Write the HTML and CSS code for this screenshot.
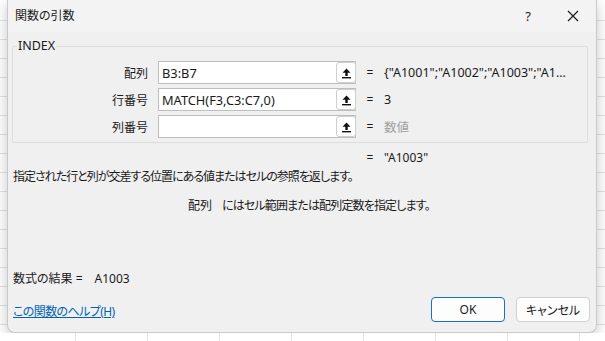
FILE: index.html
```html
<!DOCTYPE html>
<html>
<head>
    <title>関数の引数</title>
    <link rel="stylesheet" href="styles.css">
</head>
<body>
    <div class="dialog">
        <div class="titlebar">
            <span class="title">関数の引数</span>
            <span class="help">?</span>
            <span class="close">
                <svg width="12" height="12" viewBox="0 0 12 12"><path d="M1 1 L11 11 M11 1 L1 11" stroke="#1b1b1b" stroke-width="1.2" fill="none"/></svg>
            </span>
        </div>

        <div class="content">
            <fieldset class="group">
                <legend>INDEX</legend>
                <div class="args">
                    <div class="arg-row">
                        <label>配列</label>
                        <div class="ref-box">
                            <span class="ref-text">B3:B7</span>
                            <span class="ref-btn">
                                <svg width="11" height="12" viewBox="0 0 11 12"><path d="M5.5 1.5 L1.5 5.8 H4.3 V9 H6.7 V5.8 H9.5 Z" fill="#111"/><rect x="1" y="10" width="9" height="1.4" fill="#111"/></svg>
                            </span>
                        </div>
                        <span class="eq">=</span>
                        <span class="val">{"A1001";"A1002";"A1003";"A1...</span>
                    </div>
                    <div class="arg-row">
                        <label>行番号</label>
                        <div class="ref-box">
                            <span class="ref-text">MATCH(F3,C3:C7,0)</span>
                            <span class="ref-btn">
                                <svg width="11" height="12" viewBox="0 0 11 12"><path d="M5.5 1.5 L1.5 5.8 H4.3 V9 H6.7 V5.8 H9.5 Z" fill="#111"/><rect x="1" y="10" width="9" height="1.4" fill="#111"/></svg>
                            </span>
                        </div>
                        <span class="eq">=</span>
                        <span class="val">3</span>
                    </div>
                    <div class="arg-row">
                        <label>列番号</label>
                        <div class="ref-box">
                            <span class="ref-text"></span>
                            <span class="ref-btn">
                                <svg width="11" height="12" viewBox="0 0 11 12"><path d="M5.5 1.5 L1.5 5.8 H4.3 V9 H6.7 V5.8 H9.5 Z" fill="#111"/><rect x="1" y="10" width="9" height="1.4" fill="#111"/></svg>
                            </span>
                        </div>
                        <span class="eq">=</span>
                        <span class="val muted">数値</span>
                    </div>
                </div>
            </fieldset>

            <div class="formula-value"><span class="eq">=</span><span>"A1003"</span></div>
            <p class="desc">指定された行と列が交差する位置にある値またはセルの参照を返します。</p>
            <p class="arg-desc"><span class="arg-name">配列</span>にはセル範囲または配列定数を指定します。</p>

            <div class="result">数式の結果 =<span class="result-val">A1003</span></div>

            <div class="footer">
                <a href="#" class="help-link">この関数のヘルプ(H)</a>
                <div class="buttons">
                    <button class="btn btn-default">OK</button>
                    <button class="btn">キャンセル</button>
                </div>
            </div>
        </div>
    </div>
</body>
</html>
```

FILE: styles.css
```css
html {
    height: 100%;
    background-color: #ffffff;
    background-image:
        repeating-linear-gradient(to bottom, transparent 0, transparent 18px, #e2e2e2 18px, #e2e2e2 19px),
        repeating-linear-gradient(to right, transparent 0, transparent 71px, #e2e2e2 71px, #e2e2e2 72px);
    background-position: 0 2px, 4px 0;
}

body {
    margin: 0;
    font-family: "Noto Sans", "Noto Sans CJK JP", sans-serif;
    font-size: 12px;
    font-feature-settings: "palt";
    color: #1a1a1a;
}

.dialog {
    margin-left: 7px;
    width: 588px;
    height: 332px;
    background-color: #f0f0f0;
    border: 1px solid #c9c9c9;
    border-top: none;
    border-radius: 0 0 8px 8px;
    box-shadow: 0 4px 14px rgba(0, 0, 0, 0.22);
    overflow: hidden;
}

.titlebar {
    height: 32px;
    display: flex;
    align-items: center;
    background-color: #f3f3f3;
    padding-left: 7px;
}

.title {
    flex: 1;
    line-height: 16px;
}

.help {
    width: 20px;
    text-align: center;
    font-size: 13px;
    margin-right: 25px;
}

.close {
    width: 20px;
    margin-right: 13px;
    display: flex;
    justify-content: center;
}

.content {
    padding: 0 8px 0 4px;
}

.group {
    margin: 7px 0 0 0;
    padding: 0 0 4px 0;
    border: 1px solid #dcdcdc;
    border-radius: 2px;
}

.group legend {
    margin-left: 4px;
    padding: 0 1px;
    line-height: 14px;
    font-size: 12.5px;
}

.args {
    padding-top: 8px;
    display: flex;
    flex-direction: column;
    gap: 4px;
}

.arg-row {
    display: flex;
    align-items: center;
    height: 23px;
}

.arg-row label {
    width: 135px;
    text-align: right;
    margin-right: 10px;
}

.ref-box {
    width: 196px;
    height: 21px;
    background-color: #ffffff;
    border: 1px solid #bdbdbd;
    display: flex;
    align-items: center;
    justify-content: space-between;
}

.ref-text {
    padding-left: 3px;
    font-size: 12.8px;
}

.ref-btn {
    width: 20px;
    height: 21px;
    box-sizing: border-box;
    border: 1px solid #cfcfcf;
    border-radius: 3px;
    background-color: #ffffff;
    display: flex;
    align-items: center;
    justify-content: center;
    margin-right: -1px;
}

.eq {
    margin-left: 10px;
    width: 8px;
    text-align: center;
}

.val {
    margin-left: 10px;
    font-size: 12.5px;
}

.muted {
    color: #a0a0a0;
}

.formula-value {
    margin-top: 7px;
    padding-left: 354px;
    line-height: 16px;
    display: flex;
    gap: 10px;
}

.formula-value .eq {
    margin-left: 0;
}

.desc {
    margin: 3px 0 0 1px;
    line-height: 16px;
    letter-spacing: -1px;
}

.arg-desc {
    margin: 13px 0 0 176px;
    line-height: 16px;
    letter-spacing: -0.85px;
}

.arg-name {
    margin-right: 10px;
    letter-spacing: 0;
}

.result {
    margin: 57px 0 0 1px;
    line-height: 16px;
}

.result-val {
    margin-left: 12px;
}

.footer {
    margin-top: 10px;
    display: flex;
    align-items: center;
    justify-content: space-between;
    margin-right: -2px;
}

.help-link {
    margin-left: 1px;
    padding-top: 3px;
    color: #0063b1;
    text-decoration: underline;
    letter-spacing: -0.6px;
}

.buttons {
    display: flex;
    gap: 11px;
}

.btn {
    width: 74px;
    height: 25px;
    font-family: "Noto Sans", "Noto Sans CJK JP", sans-serif;
    font-size: 12px;
    font-feature-settings: "palt";
    color: #1a1a1a;
    background-color: #fdfdfd;
    border: 1px solid #d0d0d0;
    border-radius: 4px;
    padding: 0;
}

.btn-default {
    border-color: #1b6fc4;
}
```
